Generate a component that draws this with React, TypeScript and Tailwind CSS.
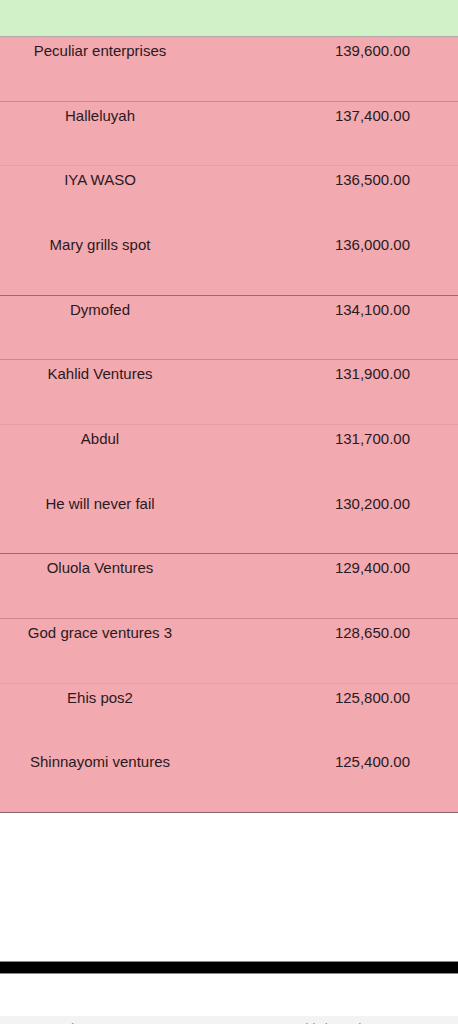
const rows: { name: string; amount: string; line: string }[] = [
  { name: "Peculiar enterprises", amount: "139,600.00", line: "border-[#c98890]" },
  { name: "Halleluyah", amount: "137,400.00", line: "border-[#e89ea6]" },
  { name: "IYA WASO", amount: "136,500.00", line: "border-transparent" },
  { name: "Mary grills spot", amount: "136,000.00", line: "border-[#9c6c72]" },
  { name: "Dymofed", amount: "134,100.00", line: "border-[#c98890]" },
  { name: "Kahlid Ventures", amount: "131,900.00", line: "border-[#e89ea6]" },
  { name: "Abdul", amount: "131,700.00", line: "border-transparent" },
  { name: "He will never fail", amount: "130,200.00", line: "border-[#9c6c72]" },
  { name: "Oluola Ventures", amount: "129,400.00", line: "border-[#c98890]" },
  { name: "God grace ventures 3", amount: "128,650.00", line: "border-[#e89ea6]" },
  { name: "Ehis pos2", amount: "125,800.00", line: "border-transparent" },
  { name: "Shinnayomi ventures", amount: "125,400.00", line: "border-[#8a666b]" },
];

export default function App() {
  return (
    <div className="w-[458px] h-[1024px] overflow-hidden bg-white font-['Liberation_Sans',Arial,sans-serif] text-[15px] text-[#2b1a1d]">
      <div className="h-[37px] bg-[#d1f1c9] border-b border-[#b7a8a8]" />
      <div className="bg-[#f2a9b0]">
        {rows.map((r) => (
          <div key={r.name} className={`flex h-[64.67px] border-b ${r.line}`}>
            <div className="w-[200px] pt-[3px] text-center">{r.name}</div>
            <div className="flex-1 pt-[3px] pr-[48px] text-right">{r.amount}</div>
          </div>
        ))}
      </div>
      <div className="h-[148px]" />
      <div className="h-[13px] bg-black border-y border-[#8a8a8a]" />
      <div className="h-[42px]" />
      <div className="flex h-[40px] bg-[#f3f3f3] pt-[3px] text-[14px] text-[#8c8c8c]">
        <div className="w-[200px] pl-[47px]">Business Name</div>
        <div className="flex-1 pl-[92px]">Withdrawal Amount</div>
      </div>
    </div>
  );
}
